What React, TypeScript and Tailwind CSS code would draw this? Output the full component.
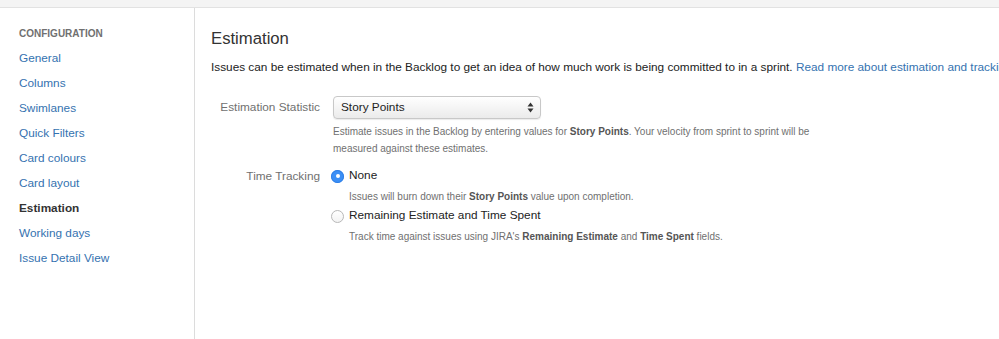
import { useState } from "react"

const navItems = [
  "General",
  "Columns",
  "Swimlanes",
  "Quick Filters",
  "Card colours",
  "Card layout",
  "Estimation",
  "Working days",
  "Issue Detail View",
]

function Radio({ checked, onClick }: { checked: boolean; onClick: () => void }) {
  if (checked) {
    return (
      <span
        onClick={onClick}
        className="flex h-[13px] w-[13px] shrink-0 items-center justify-center rounded-full bg-[#3b8ff6] shadow-[inset_0_0_0_1px_#2f7fe6]"
      >
        <span className="h-[4px] w-[4px] rounded-full bg-white" />
      </span>
    )
  }
  return (
    <span
      onClick={onClick}
      className="h-[13px] w-[13px] shrink-0 rounded-full border border-[#b8b8b8] bg-gradient-to-b from-white to-[#f3f3f3]"
    />
  )
}

export default function App() {
  const [tracking, setTracking] = useState("none")

  return (
    <div className="h-[339px] w-[999px] overflow-hidden bg-white font-['Liberation_Sans',Arial,sans-serif] text-[#333]">
      {/* top strip */}
      <div className="h-[8px] border-b border-[#e2e2e2] bg-[#f4f4f4]" />

      <div className="flex h-[331px]">
        {/* Sidebar */}
        <nav className="w-[195px] shrink-0 border-r border-[#dcdcdc] pl-[19px] pt-[19px]">
          <div className="text-[10px] font-bold uppercase leading-[14px] text-[#707070]">Configuration</div>
          <ul className="mt-[5px]">
            {navItems.map((item) => (
              <li
                key={item}
                className={
                  item === "Estimation"
                    ? "text-[11.8px] font-bold leading-[25px] text-[#333]"
                    : "text-[11.8px] leading-[25px] text-[#3572b0]"
                }
              >
                {item}
              </li>
            ))}
          </ul>
        </nav>

        {/* Main */}
        <main className="min-w-0 flex-1 overflow-hidden pl-[16px] pt-[19px]">
          <h1 className="text-[16.7px] leading-[24px] text-[#333]">Estimation</h1>
          <p className="mt-[6px] whitespace-nowrap text-[11.8px] leading-[20px] text-[#222]">
            Issues can be estimated when in the Backlog to get an idea of how much work is being committed to in a sprint.{" "}
            <span className="text-[#3572b0]">Read more about estimation and tracking</span>
          </p>

          <div className="mt-[19px] flex">
            <div className="w-[110px] shrink-0 pr-[1px] text-right text-[11.8px] leading-[23px] text-[#707070]">
              Estimation Statistic
            </div>
            <div className="ml-[12px]">
              <div className="flex h-[23px] w-[208px] items-center justify-between rounded-[4px] border border-[#c8c8c8] bg-gradient-to-b from-white to-[#ebebeb] pl-[7px] pr-[6px] text-[11.8px] text-[#222] shadow-[0_1px_1px_rgba(0,0,0,0.08)]">
                <span>Story Points</span>
                <svg width="7" height="11" viewBox="0 0 7 11">
                  <path d="M3.5 0.5 L6.5 4.5 L0.5 4.5 Z" fill="#333" />
                  <path d="M3.5 10.5 L6.5 6.5 L0.5 6.5 Z" fill="#333" />
                </svg>
              </div>
              <p className="mt-[4px] text-[10px] leading-[17px] text-[#707070]">
                Estimate issues in the Backlog by entering values for{" "}
                <b className="text-[#555]">Story Points</b>. Your velocity from sprint to sprint will be
                <br />
                measured against these estimates.
              </p>
            </div>
          </div>

          <div className="mt-[9px] flex">
            <div className="w-[110px] shrink-0 pr-[1px] text-right text-[11.8px] leading-[20px] text-[#707070]">
              Time Tracking
            </div>
            <div className="ml-[10px]">
              <label className="flex h-[20px] items-center gap-[5px] text-[11.8px] text-[#222]">
                <Radio checked={tracking === "none"} onClick={() => setTracking("none")} />
                None
              </label>
              <p className="mt-[1.5px] pl-[18px] text-[10px] leading-[17px] text-[#707070]">
                Issues will burn down their <b className="text-[#555]">Story Points</b> value upon completion.
              </p>
              <label className="mt-[1.5px] flex h-[20px] items-center gap-[5px] text-[11.8px] text-[#222]">
                <Radio checked={tracking === "remaining"} onClick={() => setTracking("remaining")} />
                Remaining Estimate and Time Spent
              </label>
              <p className="mt-[1.5px] pl-[18px] text-[10px] leading-[17px] text-[#707070]">
                Track time against issues using JIRA's <b className="text-[#555]">Remaining Estimate</b> and{" "}
                <b className="text-[#555]">Time Spent</b> fields.
              </p>
            </div>
          </div>
        </main>
      </div>
    </div>
  )
}
